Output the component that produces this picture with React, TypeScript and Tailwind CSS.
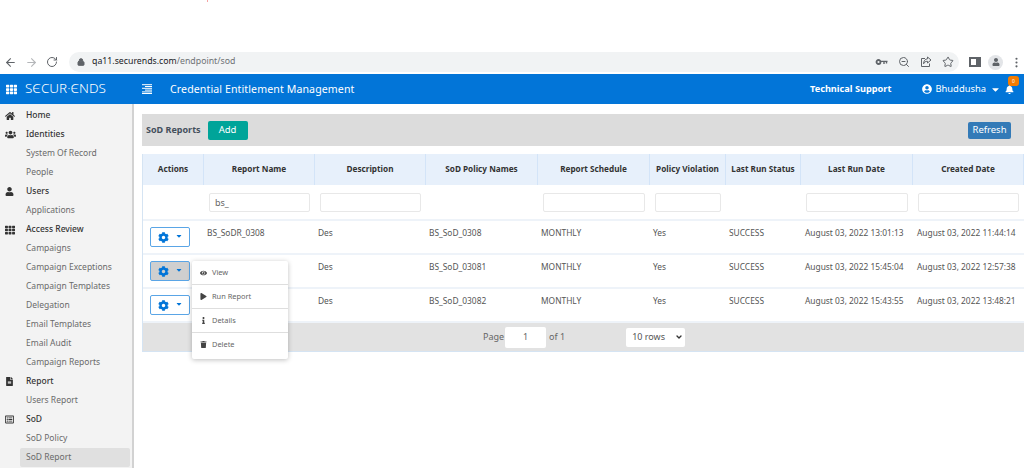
import React from "react";
import { ArrowLeft, ArrowRight, RotateCw, Lock, ZoomOut, Star, EllipsisVertical, ChevronDown } from "lucide-react";
import { FaHome, FaUsers, FaUser, FaTh, FaFileAlt, FaCog, FaEye, FaPlay, FaInfo, FaTrash, FaCaretDown, FaBell, FaUserCircle, FaRegListAlt } from "react-icons/fa";

const cols = "grid grid-cols-[61px_111px_111px_112px_112px_76px_75px_112px_111px]";

const nav: [string, any?, number?][] = [
  ["Home", FaHome, 10], ["Identities", FaUsers, 11], ["System Of Record"], ["People"], ["Users", FaUser, 9], ["Applications"],
  ["Access Review", FaTh, 10], ["Campaigns"], ["Campaign Exceptions"], ["Campaign Templates"], ["Delegation"], ["Email Templates"],
  ["Email Audit"], ["Campaign Reports"], ["Report", FaFileAlt, 9], ["Users Report"], ["SoD", FaRegListAlt, 9], ["SoD Policy"], ["SoD Report"],
];

const heads = ["Actions", "Report Name", "Description", "SoD Policy Names", "Report Schedule", "Policy Violation", "Last Run Status", "Last Run Date", "Created Date"];

const filters = [
  ["bs_"], [""], null, [""], [""], null, [""], [""],
];

const rows = [
  ["BS_SoDR_0308", "Des", "BS_SoD_0308", "MONTHLY", "Yes", "SUCCESS", "August 03, 2022 13:01:13", "August 03, 2022 11:44:14"],
  ["", "Des", "BS_SoD_03081", "MONTHLY", "Yes", "SUCCESS", "August 03, 2022 15:45:04", "August 03, 2022 12:57:38"],
  ["", "Des", "BS_SoD_03082", "MONTHLY", "Yes", "SUCCESS", "August 03, 2022 15:43:55", "August 03, 2022 13:48:21"],
];

const menu: [string, any, number][] = [["View", FaEye, 8], ["Run Report", FaPlay, 7], ["Details", FaInfo, 7], ["Delete", FaTrash, 7]];

function KeyIcon() {
  return (
    <svg width="13" height="12" viewBox="0 0 13 12" fill="none" stroke="currentColor">
      <circle cx="3.5" cy="6" r="2" strokeWidth="1.8" />
      <path d="M5.5 5.4H12.5M9 5.4V8M11.5 5.4V7.6" strokeWidth="1.4" />
    </svg>
  );
}

function ShareIcon() {
  return (
    <svg width="12" height="12" viewBox="0 0 12 12" fill="none" stroke="currentColor" strokeWidth="1">
      <path d="M5 2.5H1.5V10.5H9.5V7.5" />
      <path d="M7.5 1L11 4L7.5 7V5.3C5.5 5.3 4.3 6 3.6 7.8C3.6 5 5 3 7.5 2.8Z" />
    </svg>
  );
}

function MenuLines() {
  return (
    <svg width="10" height="10" viewBox="0 0 10 10" fill="none" stroke="currentColor" strokeWidth="1">
      <path d="M0 0.7H10M3 2.5H10M0 4.3H10M3 6.1H10M0 7.9H10M0 9.5H10" />
    </svg>
  );
}

export default function App() {
  return (
    <div className="relative w-[1024px] h-[468px] overflow-hidden bg-white flex flex-col font-['Open_Sans',sans-serif] text-[#555]">
      <div className="absolute left-[207px] top-0 w-[1px] h-[2px] bg-[#f5a3a3]" />
      <div className="h-[52px] shrink-0" />
      <div className="h-[22px] shrink-0 flex items-start text-[#5f6368]">
        <div className="w-[69px] flex items-center gap-[8px] pl-[4px] h-[20px]">
          <ArrowLeft size={13} strokeWidth={2} />
          <ArrowRight size={13} strokeWidth={2} className="text-[#b4b6b9]" />
          <RotateCw size={12} strokeWidth={2} />
        </div>
        <div className="w-[890px] h-[20px] rounded-full bg-[#f1f3f4] flex items-center pl-[8px] pr-[5px]">
          <Lock size={8} strokeWidth={3} fill="currentColor" />
          <span className="ml-[7px] text-[8.75px] font-['Roboto',sans-serif] text-[#202124]">qa11.securends.com<span className="text-[#6f7275]">/endpoint/sod</span></span>
          <div className="ml-auto flex items-center gap-[10px]">
            <KeyIcon />
            <ZoomOut size={12} />
            <ShareIcon />
            <Star size={12} strokeWidth={2} />
          </div>
        </div>
        <div className="flex items-center h-[20px] pl-[10px] gap-[7px]">
          <div className="w-[12px] h-[10px] border-[2px] border-[#5f6368] border-r-[5px]" />
          <div className="w-[15px] h-[15px] rounded-full bg-[#e3e5e8] flex items-center justify-center"><FaUser size={8} /></div>
          <EllipsisVertical size={13} />
        </div>
      </div>
      <header className="h-[30px] shrink-0 bg-[#0275d8] text-white flex items-center">
        <FaTh size={11} className="ml-[6px]" />
        <span className="ml-[8px] w-[80px] text-[13.5px] font-['Noto_Sans',sans-serif] font-light leading-none whitespace-nowrap">SЄCUR·ЄNDS</span>
        <div className="ml-[37px]"><MenuLines /></div>
        <span className="ml-[18px] pt-[1px] text-[10.6px] tracking-[0.1px]">Credential Entitlement Management</span>
        <span className="ml-auto text-[9.2px] font-bold">Technical Support</span>
        <FaUserCircle size={10} className="ml-[31px]" />
        <span className="ml-[3px] text-[9.4px]">Bhuddusha</span>
        <FaCaretDown size={11} className="ml-[4px]" />
        <div className="relative ml-[4px] mr-[10px]">
          <FaBell size={9} />
          <span className="absolute -top-[9px] left-[3px] w-[11px] h-[10px] rounded-[3px] bg-[#f57c00] text-[5px] text-center leading-[10px]">0</span>
        </div>
      </header>
      <div className="flex flex-1 min-h-0">
        <aside className="w-[134px] shrink-0 bg-[#f3f3f3] border-r-[2px] border-[#d2d2d2] pt-[2px] text-[8.5px]">
          {nav.map(([label, Icon, size]) => (
            <div key={label} className={`flex items-center h-[19px] ${label === "SoD Report" ? "bg-[#e0e0e0] ml-[20px] mr-[2px] pl-[6px] rounded-[2px]" : "pl-[26px]"} ${Icon ? "text-[#333] relative font-medium" : "text-[#6a6a6a]"}`}>
              {Icon && <Icon size={size} className="absolute left-[5px] text-[#333]" />}
              {label}
            </div>
          ))}
        </aside>
        <main className="flex-1 min-w-0 pl-[8px] pt-[10px] relative">
          <div className="h-[32px] bg-[#dcdcdc] flex items-center pl-[4px] pr-[13px]">
            <span className="text-[9px] font-bold text-[#44505c]">SoD Reports</span>
            <button className="ml-[7px] w-[40px] h-[19px] rounded-[2px] bg-[#00a499] text-white text-[9.5px]">Add</button>
            <button className="ml-auto w-[43px] h-[17px] rounded-[2px] bg-[#337ab7] text-white text-[9.5px]">Refresh</button>
          </div>
          <div className="mt-[8px] w-[882px] border-l border-b border-[#d5e4f3]">
            <div className={`${cols} h-[31px] bg-[#e7f0fb] text-[8.2px] font-bold font-['Liberation_Sans',sans-serif] text-[#333]`}>
              {heads.map((h) => (
                <div key={h} className="flex items-center justify-center border-r-[1px] border-[#d3e4f8] whitespace-nowrap">{h}</div>
              ))}
            </div>
            <div className={`${cols} h-[36px] items-center border-b-2 border-[#eef3f9]`}>
              <div />
              {filters.map((f, i) => (
                <div key={i} className="px-[5px]">
                  {f && <div className="h-[19px] border border-[#e8e8e8] rounded-[2px] bg-white text-[9px] text-[#666] pl-[5px] leading-[17px]">{f[0]}</div>}
                </div>
              ))}
            </div>
            {rows.map((r, i) => (
              <div key={i} className={`${cols} h-[34px] border-b-2 border-[#eef3f9] text-[8.4px] text-[#555]`}>
                <div className="flex items-start pt-[6px] pl-[7px]">
                  <button className={`w-[40px] h-[20px] rounded-[2px] border border-[#5aa5e6] flex items-center justify-center gap-[6px] text-[#0275d8] ${i === 1 ? "bg-[#cfcfcf]" : "bg-white"}`}>
                    <FaCog size={11} />
                    <FaCaretDown size={8} className="-mt-[3px]" />
                  </button>
                </div>
                {r.map((c, j) => (
                  <div key={j} className={`pt-[6px] whitespace-nowrap ${j >= 6 ? "pl-[4px]" : "pl-[3px]"}`}>{c}</div>
                ))}
              </div>
            ))}
            <div className="h-[28px] bg-[#e2e2e2] flex items-center text-[9px] text-[#666]">
              <span className="ml-[340px]">Page</span>
              <div className="ml-[1px] w-[41px] h-[21px] bg-white rounded-[2px] flex items-center justify-center">1</div>
              <span className="ml-[3px]">of 1</span>
              <div className="ml-[61px] w-[59px] h-[19px] bg-white rounded-[2px] flex items-center pl-[6px] text-[#555]">
                10 rows
                <ChevronDown size={8} strokeWidth={4} className="ml-auto mr-[2px] text-[#333]" />
              </div>
            </div>
          </div>
          <div className="absolute left-[58px] top-[157px] w-[96px] bg-white rounded-[2px] shadow-[0_1px_5px_rgba(0,0,0,0.25)] flex flex-col text-[7.4px] text-[#666]">
            {menu.map(([label, Icon, size], i) => (
              <div key={label} className={`h-[24px] flex items-center pl-[8px] gap-[5px] ${i < 3 ? "border-b border-[#dedede]" : "h-[26px] pb-[3px]"}`}>
                <Icon size={size} className="text-[#444] w-[7px]" />
                {label}
              </div>
            ))}
          </div>
        </main>
      </div>
    </div>
  );
}
